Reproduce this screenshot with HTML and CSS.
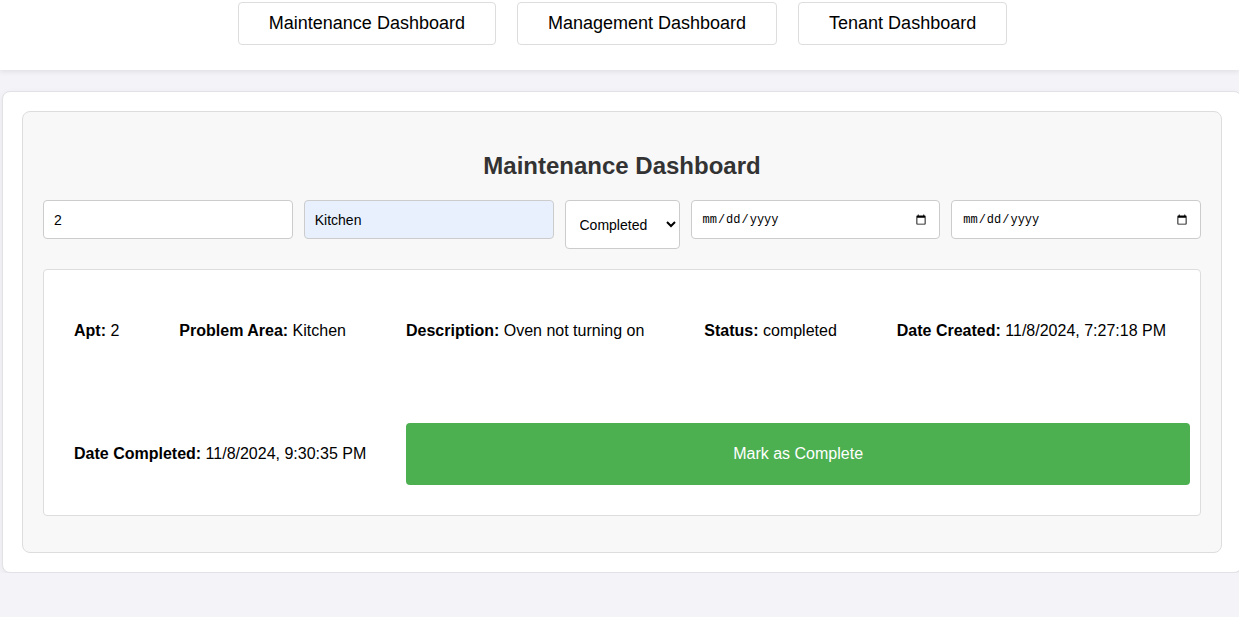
FILE: index.html
```html
<!DOCTYPE html>
<html lang="en">
<head>
<meta charset="utf-8">
<title>Maintenance Dashboard</title>
<link rel="stylesheet" href="styles.css">
</head>
<body>
<header class="topbar">
  <nav class="nav">
    <button class="nav-btn">Maintenance Dashboard</button>
    <button class="nav-btn">Management Dashboard</button>
    <button class="nav-btn">Tenant Dashboard</button>
  </nav>
</header>
<main class="outer">
  <section class="panel">
    <h2 class="title">Maintenance Dashboard</h2>
    <div class="filters">
      <input class="field" type="text" value="2">
      <input class="field autofill" type="text" value="Kitchen">
      <select class="field select">
        <option>All</option>
        <option selected>Completed</option>
        <option>Pending</option>
      </select>
      <input class="field date" type="date">
      <input class="field date" type="date">
    </div>
    <div class="request">
      <div class="row row-top">
        <p class="item"><b>Apt:</b> 2</p>
        <p class="item"><b>Problem Area:</b> Kitchen</p>
        <p class="item"><b>Description:</b> Oven not turning on</p>
        <p class="item"><b>Status:</b> completed</p>
        <p class="item"><b>Date Created:</b> 11/8/2024, 7:27:18 PM</p>
      </div>
      <div class="row row-bottom">
        <p class="item"><b>Date Completed:</b> 11/8/2024, 9:30:35 PM</p>
        <button class="complete-btn">Mark as Complete</button>
      </div>
    </div>
  </section>
</main>
</body>
</html>
```

FILE: styles.css
```css
* { box-sizing: border-box; }

html, body {
  margin: 0;
  padding: 0;
  overflow-x: hidden;
}

body {
  background: #f3f3f8;
  font-family: "Liberation Sans", Arial, sans-serif;
  color: #000;
}

.topbar {
  background: #fff;
  height: 70px;
  box-shadow: 0 2px 5px rgba(0, 0, 0, 0.08);
  padding-top: 2px;
}

.nav {
  display: flex;
  justify-content: center;
  gap: 21px;
  padding-left: 6px;
}

.nav-btn {
  font-family: "Liberation Sans", Arial, sans-serif;
  font-size: 18px;
  color: #000;
  background: #fff;
  border: 1px solid #ddd;
  border-radius: 4px;
  padding: 10px 30px;
  height: 43px;
  line-height: 21px;
}

.outer {
  margin: 21px 0 0 2px;
  width: 1240px;
  background: #fff;
  border: 1px solid #e2e2e6;
  border-radius: 8px;
  padding: 19px;
  box-shadow: 0 2px 6px rgba(0, 0, 0, 0.06);
}

.panel {
  background: #f8f8f8;
  border: 1px solid #ddd;
  border-radius: 8px;
  padding: 20px 20px 16px;
}

.title {
  margin: 20px 0 20px;
  text-align: center;
  font-size: 24px;
  line-height: 28px;
  font-weight: bold;
  color: #333;
}

.filters {
  display: flex;
  align-items: flex-start;
  gap: 11px;
}

.field {
  flex: 1;
  min-width: 0;
  height: 39px;
  padding: 10px;
  font-family: "Liberation Sans", Arial, sans-serif;
  font-size: 14px;
  color: #000;
  background: #fff;
  border: 1px solid #ccc;
  border-radius: 4px;
}

.autofill {
  background: #e8f0fe;
}

.select {
  flex: 0 0 115px;
  height: 49px;
  padding: 10px 8px 10px 10px;
}

.date {
  font-family: "Liberation Mono", monospace;
  font-size: 12px;
  padding: 10px 10px;
}

.request {
  margin: 20px 0 20px;
  background: #fff;
  border: 1px solid #ddd;
  border-radius: 4px;
  padding: 31px 10px 30px 30px;
}

.row {
  display: flex;
  align-items: center;
}

.row-top {
  height: 60px;
  justify-content: space-between;
  padding-right: 24px;
}

.row-bottom {
  margin-top: 62px;
  height: 62px;
  gap: 40px;
}

.item {
  margin: 0;
  font-size: 16px;
  line-height: 20px;
  white-space: nowrap;
}

.complete-btn {
  flex: 1;
  height: 62px;
  background: #4caf50;
  color: #fff;
  border: none;
  border-radius: 4px;
  font-family: "Liberation Sans", Arial, sans-serif;
  font-size: 16px;
}
```
